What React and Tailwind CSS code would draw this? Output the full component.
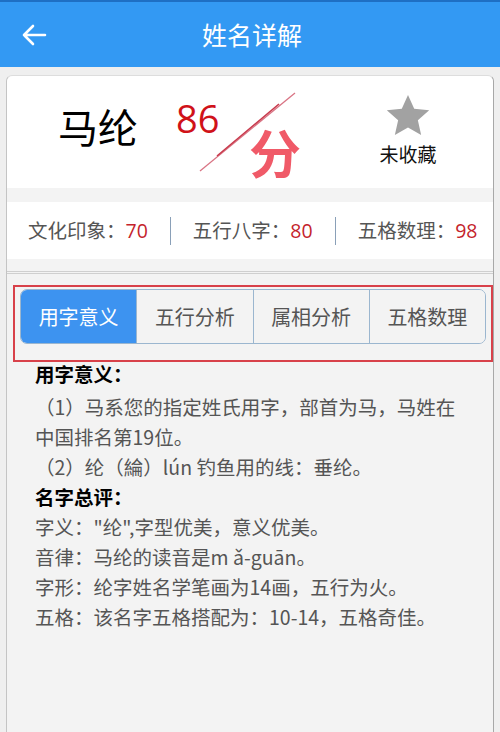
import React from "react";

const font = { fontFamily: '"Noto Sans CJK SC", "Noto Sans", sans-serif' };
const num = { fontFamily: '"Open Sans", sans-serif' };

export default function App() {
  const tabs = ["用字意义", "五行分析", "属相分析", "五格数理"];
  return (
    <div className="w-[500px] h-[732px] bg-[#efefef] overflow-hidden flex flex-col" style={font}>
      <div className="h-[2px] bg-[#1e6fc4]" />
      <div className="h-[65px] bg-[#3399f3] flex items-center relative">
        <svg className="absolute left-[21px] top-[21px]" width="26" height="24" viewBox="0 0 26 24">
          <path d="M24 12H3M12 3L3 12l9 9" fill="none" stroke="white" strokeWidth="2.6" strokeLinecap="round" strokeLinejoin="round" />
        </svg>
        <div className="w-full text-center text-white text-[25px] leading-none pl-[4px]">姓名详解</div>
      </div>
      <div className="h-[8px]" />
      <div className="flex-1 mx-[6px] border-l border-r border-t border-l-[#c4c4c4] border-r-[#a8a8a8] border-t-[#ddd] rounded-t-[6px] bg-[#f3f3f3] flex flex-col">
        <div className="h-[112px] bg-white rounded-t-[6px] flex items-center relative">
          <div className="absolute left-[51px] top-[30px] text-[40px] leading-none text-black">马纶</div>
          <div className="absolute left-[169px] top-[23px] text-[38px] leading-none text-[#d01219]" style={num}>86</div>
          <svg className="absolute left-[190px] top-[14px]" width="110" height="86" viewBox="0 0 110 86">
            <line x1="3" y1="81" x2="98" y2="3" stroke="#d97484" strokeWidth="1.3" />
            <line x1="20" y1="66" x2="82" y2="14" stroke="#c83a4c" strokeWidth="1.6" />
          </svg>
          <div className="absolute left-[242px] top-[50px] text-[52px] leading-none text-[#f05a68] font-bold">分</div>
          <div className="absolute left-[368px] top-[18px] w-[66px] flex flex-col items-center">
            <svg width="44" height="42" viewBox="0 0 24 23">
              <path d="M12 0.5l3.4 7.6 8.2.8-6.2 5.5 1.8 8.1L12 18.3l-7.2 4.2 1.8-8.1L.4 8.9l8.2-.8z" fill="#a2a2a2" />
            </svg>
            <div className="mt-[8px] text-[19px] leading-none text-[#111]">未收藏</div>
          </div>
        </div>
        <div className="h-[14px]" />
        <div className="h-[57px] bg-white flex items-center gap-[22px] pl-[21px] text-[19.5px] text-[#555] whitespace-nowrap">
          <div>文化印象：<span className="text-[#c4232c]" style={num}>70</span></div>
          <div className="w-px h-[28px] bg-[#8aa0b8]" />
          <div>五行八字：<span className="text-[#c4232c]" style={num}>80</span></div>
          <div className="w-px h-[28px] bg-[#8aa0b8]" />
          <div>五格数理：<span className="text-[#c4232c]" style={num}>98</span></div>
        </div>
        <div className="h-[12px]" />
        <div className="h-[3px] border-t border-b border-[#cfcfcf]" />
        <div className="mt-[11px] ml-[6px] mr-0 border-2 border-[#d8414a] px-[5px] pt-[2px] pb-[16px]">
          <div className="flex h-[55px] border border-[#9bb6cf] rounded-[7px] overflow-hidden">
            {tabs.map((t, i) => (
              <div
                key={t}
                className={
                  i === 0
                    ? "flex-1 flex items-center justify-center bg-[#3d93f0] text-white text-[20px]"
                    : "flex-1 flex items-center justify-center bg-[#f3f3f3] text-[#555] text-[20px] border-l border-[#9bb6cf]"
                }
              >
                {t}
              </div>
            ))}
          </div>
        </div>
        <div className="pl-[28px] -mt-[3px] text-[19.5px] leading-[30px] text-[#555] whitespace-nowrap">
          <div className="text-black font-bold h-[33px] leading-[30px]">用字意义：</div>
          <div>（1）马系您的指定姓氏用字，部首为马，马姓在</div>
          <div>中国排名第19位。</div>
          <div>（2）纶（綸）lún 钓鱼用的线：垂纶。</div>
          <div className="text-black font-bold">名字总评：</div>
          <div>字义："纶",字型优美，意义优美。</div>
          <div>音律：马纶的读音是m ǎ-guān。</div>
          <div>字形：纶字姓名学笔画为14画，五行为火。</div>
          <div>五格：该名字五格搭配为：10-14，五格奇佳。</div>
        </div>
      </div>
    </div>
  );
}
